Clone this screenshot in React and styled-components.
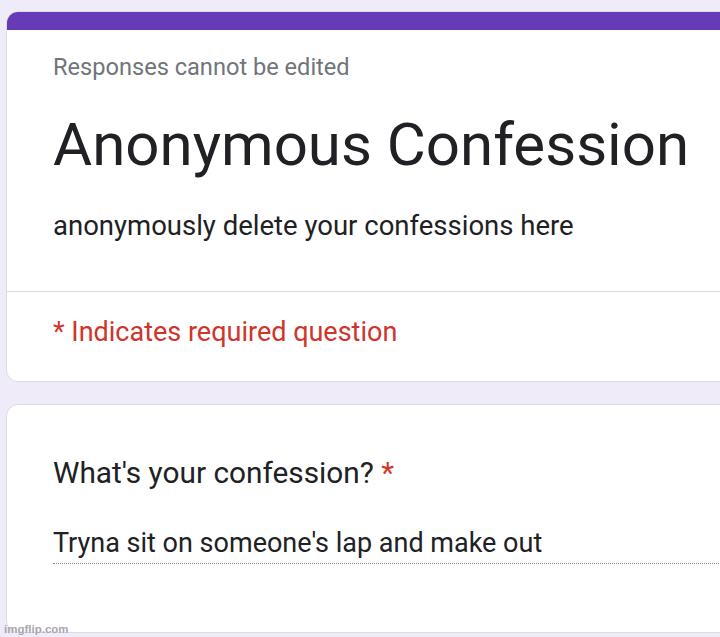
import React from 'react'
import styled, { createGlobalStyle } from 'styled-components'

const Global = createGlobalStyle`
    html, body {
        margin: 0;
        padding: 0;
        background: #f0ebf8;
        overflow: hidden;
    }
    body {
        font-family: Roboto, "Noto Sans", Arial, sans-serif;
    }
`

const Page = styled.div`
    width: 720px;
    height: 637px;
    padding: 11px 0 0 6px;
    box-sizing: border-box;
    display: flex;
    flex-direction: column;
    gap: 22px;
    position: relative;
    overflow: hidden;
`

const Card = styled.div`
    width: 780px;
    flex-shrink: 0;
    background: #ffffff;
    border: 1px solid #dadce0;
    border-radius: 12px;
    overflow: hidden;
`

const TopBand = styled.div`
    height: 19px;
    background: #673ab7;
    margin: -1px -1px 0 -1px;
`

const Head = styled.div`
    padding: 25px 46px 0 46px;
    height: 262px;
    box-sizing: border-box;
    border-bottom: 1px solid #dadce0;
`

const Note = styled.p`
    margin: 0;
    font-size: 23.6px;
    line-height: 24px;
    color: #70757a;
`

const Title = styled.h1`
    margin: 30px 0 0 0;
    font-weight: 400;
    font-size: 60px;
    line-height: 72px;
    color: #202124;
    white-space: nowrap;
`

const Desc = styled.p`
    margin: 29px 0 0 0;
    font-size: 27.5px;
    line-height: 32px;
    color: #202124;
`

const Required = styled.div`
    padding: 24px 46px 0 46px;
    height: 89px;
    box-sizing: border-box;
    font-size: 27px;
    line-height: 32px;
    color: #d0342a;
`

const Question = styled(Card)`
    padding: 50px 0 0 46px;
    height: 229px;
    box-sizing: border-box;
`

const Label = styled.div`
    font-size: 29.8px;
    line-height: 36px;
    color: #202124;

    span {
        color: #d0342a;
    }
`

const Answer = styled.div`
    margin-top: 36px;
    font-size: 27px;
    line-height: 32px;
    color: #202124;
    padding-bottom: 4px;
    border-bottom: 1px dotted #80868b;
`

const Mark = styled.div`
    position: absolute;
    left: 4px;
    bottom: 2px;
    font-family: "Liberation Sans", Arial, sans-serif;
    font-size: 11.5px;
    font-weight: bold;
    color: #a9a6ad;
`

const App = () => {
    return (
        <Page>
            <Global />
            <Card>
                <TopBand />
                <Head>
                    <Note>Responses cannot be edited</Note>
                    <Title>Anonymous Confession</Title>
                    <Desc>anonymously delete your confessions here</Desc>
                </Head>
                <Required>* Indicates required question</Required>
            </Card>

            <Question>
                <Label>What's your confession? <span>*</span></Label>
                <Answer>Tryna sit on someone's lap and make out</Answer>
            </Question>

            <Mark>imgflip.com</Mark>
        </Page>
    )
}

export default App
